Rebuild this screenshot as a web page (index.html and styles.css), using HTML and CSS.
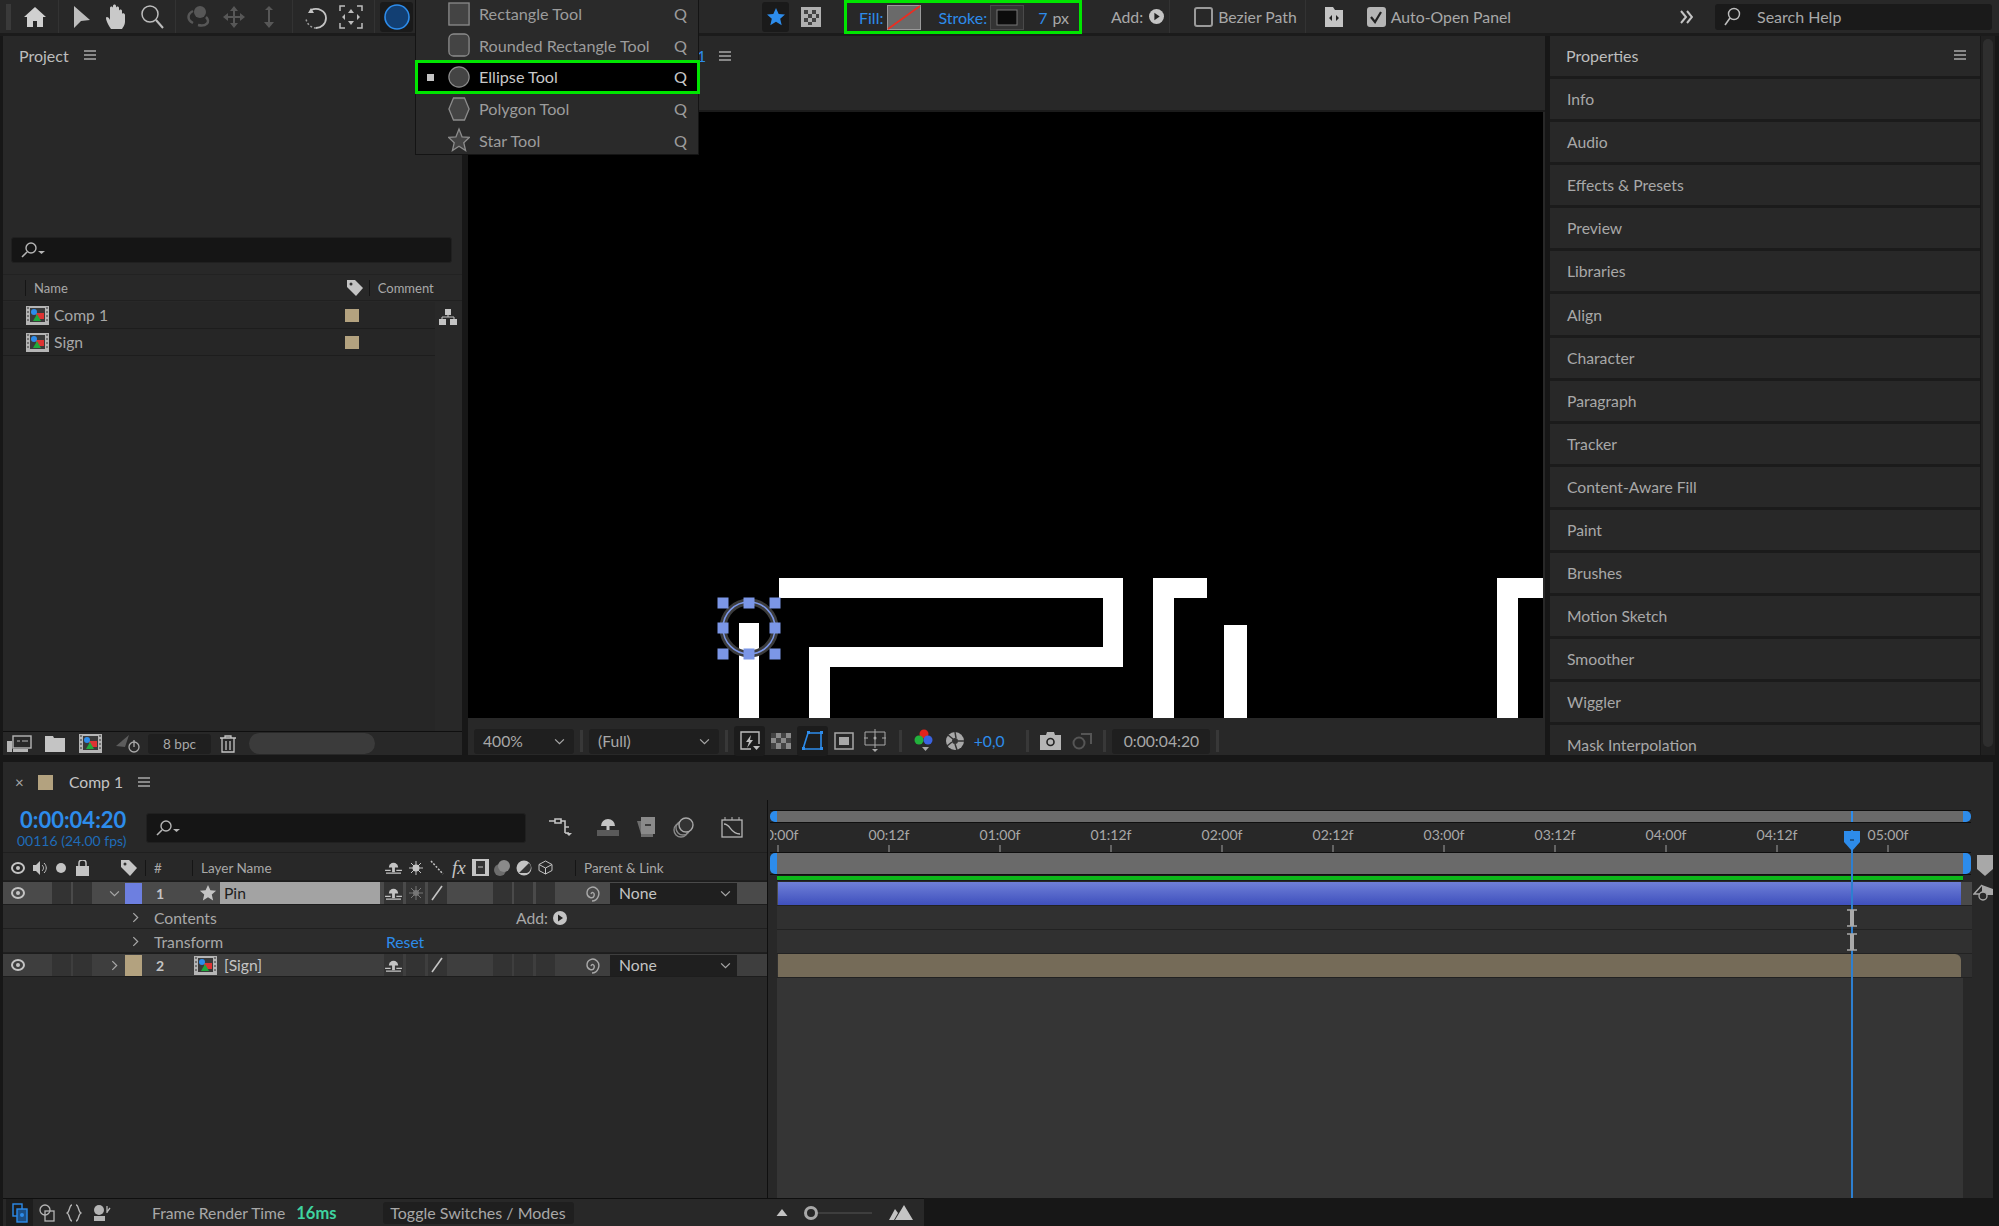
FILE: index.html
```html
<!DOCTYPE html>
<html lang="en">
<head>
  <meta charset="UTF-8" />
  <title>After Effects - Ellipse Tool</title>
  <link rel="stylesheet" href="styles.css">
</head>
<body>

  <svg class="defs" width="0" height="0">
    <symbol id="i-comp" viewBox="0 0 23 19">
      <rect width="23" height="19" fill="#b5b5b5"/>
      <rect x="4" y="2" width="15" height="14" fill="#3a3a3a"/>
      <rect x="10" y="7" width="8" height="6" fill="#d33"/>
      <circle cx="8" cy="6" r="3" fill="#2d8ceb"/>
      <path d="M11 8l4 7H7z" fill="#1faa3c"/>
      <path d="M1 2h2M1 6h2M1 10h2M1 14h2M20 2h2M20 6h2M20 10h2M20 14h2" stroke="#333"/>
    </symbol>
    <symbol id="i-burger" viewBox="0 0 12 10">
      <path d="M0 1h12M0 5h12M0 9h12" stroke="#a8a8a8" stroke-width="1.4"/>
    </symbol>
    <symbol id="i-find" viewBox="0 0 26 16">
      <circle cx="11" cy="6" r="5" fill="none" stroke="#b5b5b5" stroke-width="1.4"/>
      <path d="M7 10l-5 5" stroke="#b5b5b5" stroke-width="1.6"/>
      <path d="M18 9h7l-3.500 3z" fill="#b5b5b5"/>
    </symbol>
    <symbol id="i-eye" viewBox="0 0 14 12">
      <ellipse cx="7" cy="6" rx="6" ry="5" fill="none" stroke="#c4c4c4" stroke-width="2"/>
      <circle cx="7" cy="6" r="2" fill="#c4c4c4"/>
    </symbol>
    <symbol id="i-shy" viewBox="0 0 18 16">
      <path d="M4 8a5 5 0 0 1 10 0z" fill="#c4c4c4"/>
      <rect x="7.500" y="7" width="3" height="6" fill="#c4c4c4"/>
      <path d="M0 11h6M12 11h6M1 14h16" stroke="#c4c4c4" stroke-width="1.200"/>
    </symbol>
    <symbol id="i-down" viewBox="0 0 12 8">
      <path d="M1 1.500l5 5 5-5" fill="none" stroke="#a8a8a8" stroke-width="1.400"/>
    </symbol>
    <symbol id="i-right" viewBox="0 0 8 12">
      <path d="M1.500 1l5 5-5 5" fill="none" stroke="#a8a8a8" stroke-width="1.400"/>
    </symbol>
    <symbol id="i-spiral" viewBox="0 0 18 18">
      <path d="M9 10c1-3 4-1 3 2s-7 2-7-3 6-8 10-4 1 12-5 12" fill="none" stroke="#a8a8a8" stroke-width="1.400"/>
    </symbol>
    <symbol id="i-slash" viewBox="0 0 14 16">
      <path d="M2 15L12 1" stroke="#c4c4c4" stroke-width="1.600"/>
    </symbol>
    <symbol id="i-add" viewBox="0 0 14 14">
      <circle cx="7" cy="7" r="7" fill="#c4c4c4"/>
      <path d="M5 3.500l5 3.500-5 3.500z" fill="#222"/>
    </symbol>
    <symbol id="i-ibeam" viewBox="0 0 10 18">
      <path d="M0 1h10M0 17h10" stroke="#aaa" stroke-width="1.600"/>
      <rect x="3" y="1" width="4" height="16" fill="#aaa"/>
    </symbol>
  </svg>

  <header class="toolbar">
    <div class="grip"></div>
    <div class="tool">
      <svg width="24" height="22" viewBox="0 0 24 22"><path d="M12 1L1 11h3v10h6v-6h4v6h6V11h3z" fill="#d0d0d0"/></svg>
    </div>
    <div class="tb-sep"></div>
    <div class="tool">
      <svg width="18" height="24" viewBox="0 0 18 24"><path d="M1 1l16 14-9 1-7 7z" fill="#bdbdbd"/></svg>
    </div>
    <div class="tool">
      <svg width="24" height="26" viewBox="0 0 24 26"><path d="M6 25c-2-3-5-8-5-11 0-2 3-1 4 2V4c0-2 3-2 3 0V2c0-2 3-2 3 0v2c0-2 3-2 3 0v3c0-2 3-2 3 0v3c0-1 3-1 3 1v7c0 3-2 5-3 7z" fill="#c9c9c9"/></svg>
    </div>
    <div class="tool">
      <svg width="24" height="26" viewBox="0 0 24 26"><circle cx="10" cy="10" r="8" fill="none" stroke="#bdbdbd" stroke-width="1.500"/><path d="M16 16l7 8" stroke="#bdbdbd" stroke-width="2"/></svg>
    </div>
    <div class="tb-sep"></div>
    <div class="tool tool-dim">
      <svg width="26" height="24" viewBox="0 0 26 24"><circle cx="14" cy="7" r="6" fill="#5d5d5d"/><path d="M7 6c-6 3-6 9 0 12M20 12c5 5 0 10-8 8" fill="none" stroke="#5d5d5d" stroke-width="2.500"/></svg>
    </div>
    <div class="tool tool-dim">
      <svg width="24" height="24" viewBox="0 0 24 24"><path d="M12 1l4 5h-3v5h5V8l5 4-5 4v-3h-5v5h3l-4 5-4-5h3v-5H6v3l-5-4 5-4v3h5V6H8z" fill="#5d5d5d"/></svg>
    </div>
    <div class="tool tool-dim">
      <svg width="14" height="24" viewBox="0 0 14 24"><path d="M7 1l4 4H8v12h4l-5 6-5-6h4V5H3z" fill="#5d5d5d"/></svg>
    </div>
    <div class="tb-sep"></div>
    <div class="tool">
      <svg width="24" height="24" viewBox="0 0 24 24"><path d="M7 3l-3 5 6 0z" fill="#c4c4c4"/><path d="M7 5c7-3 15 1 15 8 0 6-5 10-10 10" fill="none" stroke="#c4c4c4" stroke-width="1.800"/><path d="M12 23c-5 0-9-4-10-9" fill="none" stroke="#9a9a9a" stroke-width="1.500" stroke-dasharray="2 2"/></svg>
    </div>
    <div class="tool">
      <svg width="24" height="24" viewBox="0 0 24 24"><path d="M1 6V1h5M18 1h5v5M23 18v5h-5M6 23H1v-5" fill="none" stroke="#bdbdbd" stroke-width="1.500"/><path d="M12 4l3 4H9zM12 20l-3-4h6zM3 12l3-3v6zM21 12l-3 3V9z" fill="#bdbdbd"/></svg>
    </div>
    <div class="tb-sep"></div>
    <div class="tool tool-active tool-shape">
      <svg width="26" height="26" viewBox="0 0 26 26"><circle cx="13" cy="13" r="12" fill="#123f73" stroke="#2d8ceb" stroke-width="1.600"/></svg>
    </div>

    <div class="tool tool-active tool-star">
      <svg width="20" height="20" viewBox="0 0 20 20"><path d="M10 1l2.700 6 6.300.6-4.800 4.200 1.500 6.400L10 14.800l-5.700 3.400 1.500-6.400L1 7.600 7.300 7z" fill="#2d8ceb"/></svg>
    </div>
    <div class="tool tool-mask">
      <svg width="20" height="20" viewBox="0 0 20 20"><rect width="20" height="20" fill="#b0b0b0"/><path d="M3 3h4v4H3zM11 3h4v4h-4zM7 7h4v4H7zM15 7h3v4h-3zM3 11h4v4H3zM11 11h4v4h-4zM7 15h4v3H7z" fill="#444"/></svg>
    </div>

    <div class="shape-opts">
      <span class="blue opt-fill">Fill:</span>
      <svg class="swatch" width="34" height="25" viewBox="0 0 34 25"><rect x=".5" y=".5" width="33" height="24" fill="#6a6a6a" stroke="#9a9a9a"/><path d="M1 24L33 1" stroke="#ee2c20" stroke-width="1.600"/></svg>
      <span class="blue opt-stroke">Stroke:</span>
      <svg class="swatch" width="34" height="25" viewBox="0 0 34 25"><rect x=".5" y=".5" width="33" height="24" fill="#333" stroke="#4a4a4a"/><rect x="7" y="5" width="20" height="15" fill="#0c0c0c" stroke="#777"/></svg>
      <span class="blue opt-width">7</span>
      <span class="opt-unit">px</span>
    </div>

    <span class="tb-label opt-add">Add:</span>
    <svg class="opt-add-icon" width="15" height="15"><use href="#i-add"/></svg>
    <div class="tb-sep sep-add"></div>
    <span class="check"></span>
    <span class="tb-label">Bezier Path</span>
    <div class="tb-sep sep-bezier"></div>
    <svg class="opt-doc" width="20" height="22" viewBox="0 0 20 22"><path d="M1 1h8l2 3h8v17H1z" fill="#c4c4c4"/><path d="M8 9l-3 3 3 3zM12 9l3 3-3 3z" fill="#222"/></svg>
    <span class="check check-on">
      <svg width="16" height="16" viewBox="0 0 16 16"><path d="M3 8l4 5 6-10" fill="none" stroke="#222" stroke-width="2.200"/></svg>
    </span>
    <span class="tb-label">Auto-Open Panel</span>

    <svg class="more" width="14" height="14" viewBox="0 0 14 14"><path d="M2 1l5 6-5 6M8 1l5 6-5 6" fill="none" stroke="#c4c4c4" stroke-width="2"/></svg>
    <div class="tb-search">
      <svg width="18" height="20" viewBox="0 0 18 20"><circle cx="11" cy="7" r="5.500" fill="none" stroke="#bdbdbd" stroke-width="1.400"/><path d="M7 11l-5 7" stroke="#bdbdbd" stroke-width="1.600"/></svg>
      <span>Search Help</span>
    </div>
  </header>

  <!-- shape tool flyout, sits over the toolbar -->
  <div class="shape-menu">
    <div class="menu-row">
      <svg width="24" height="26" viewBox="0 0 24 26"><rect x="1" y="1" width="22" height="24" fill="#444" stroke="#8c8c8c" stroke-width="1.400"/></svg>
      <span class="menu-name">Rectangle Tool</span><span>Q</span>
    </div>
    <div class="menu-row">
      <svg width="24" height="26" viewBox="0 0 24 26"><rect x="1" y="1" width="22" height="24" rx="5" fill="#444" stroke="#8c8c8c" stroke-width="1.400"/></svg>
      <span class="menu-name">Rounded Rectangle Tool</span><span>Q</span>
    </div>
    <div class="menu-row menu-selected">
      <i class="menu-bullet"></i>
      <svg width="26" height="26" viewBox="0 0 26 26"><circle cx="13" cy="13" r="12" fill="#444" stroke="#8c8c8c" stroke-width="1.400"/></svg>
      <span class="menu-name">Ellipse Tool</span><span>Q</span>
    </div>
    <div class="menu-row">
      <svg width="24" height="26" viewBox="0 0 24 26"><path d="M6 1h12l5 12-5 12H6L1 13z" fill="#444" stroke="#8c8c8c" stroke-width="1.400"/></svg>
      <span class="menu-name">Polygon Tool</span><span>Q</span>
    </div>
    <div class="menu-row">
      <svg width="24" height="26" viewBox="0 0 24 26"><path d="M12 1l3.300 8.500 8.200.5-6.300 6 2 8.500-7.200-4.700-7.200 4.700 2-8.500L.5 10l8.200-.5z" fill="#444" stroke="#8c8c8c" stroke-width="1.400"/></svg>
      <span class="menu-name">Star Tool</span><span>Q</span>
    </div>
  </div>

  <main class="workspace">
    <section class="panel project">
      <div class="panel-head">
        <span class="panel-title">Project</span>
        <svg class="burger" width="12" height="10"><use href="#i-burger"/></svg>
      </div>
      <div class="search-box project-search">
        <svg width="26" height="16"><use href="#i-find"/></svg>
      </div>
      <div class="project-cols">
        <span class="col-name">Name</span>
        <svg class="col-tag" width="18" height="18" viewBox="0 0 18 18"><path d="M1 1h8l8 8-7 8-9-9z" fill="#c4c4c4"/><circle cx="5" cy="5" r="1.500" fill="#333"/></svg>
        <span class="col-comment">Comment</span>
      </div>
      <div class="project-body">
        <div class="project-list">
          <div class="project-row">
            <svg width="23" height="19"><use href="#i-comp"/></svg>
            <span class="project-name">Comp 1</span>
            <i class="label-chip"></i>
          </div>
          <div class="project-row">
            <svg width="23" height="19"><use href="#i-comp"/></svg>
            <span class="project-name">Sign</span>
            <i class="label-chip"></i>
          </div>
        </div>
        <div class="project-side">
          <svg width="20" height="18" viewBox="0 0 20 18"><path d="M7 1h6v6H7zM1 11h7v6H1zM12 11h7v6h-7z" fill="#c4c4c4"/><path d="M10 7v2M4 11V9h12v2" fill="none" stroke="#c4c4c4"/></svg>
        </div>
      </div>
      <div class="project-foot">
        <svg class="foot-icon" width="26" height="18" viewBox="0 0 26 18"><rect x="7" y="1" width="18" height="12" fill="none" stroke="#b5b5b5" stroke-width="1.400"/><path d="M11 6h3M16 6h6" stroke="#b5b5b5"/><path d="M1 6h5v11H1zM7 14h15v3H7z" fill="#b5b5b5"/></svg>
        <svg class="foot-icon" width="20" height="16" viewBox="0 0 20 16"><path d="M0 0h8l1 2h11v14H0z" fill="#c4c4c4"/></svg>
        <svg class="foot-icon" width="25" height="19"><use href="#i-comp"/></svg>
        <svg class="foot-icon dim" width="26" height="20" viewBox="0 0 26 20"><path d="M1 12L14 1l-4 12z" fill="#5d5d5d"/><circle cx="19" cy="13" r="5" fill="none" stroke="#aaa" stroke-width="1.300"/><path d="M19 6v7" stroke="#aaa" stroke-width="1.300"/></svg>
        <span class="bpc">8 bpc</span>
        <svg class="foot-icon" width="16" height="18" viewBox="0 0 16 18"><path d="M0 3h16M5 3V1h6v2M2 3v14h12V3M6 6v9M10 6v9" fill="none" stroke="#c4c4c4" stroke-width="1.300"/></svg>
        <span class="foot-pill"></span>
      </div>
    </section>

    <section class="panel viewer">
      <div class="viewer-tab">
        <span class="blue viewer-tab-name">1</span>
        <svg class="burger" width="12" height="10"><use href="#i-burger"/></svg>
      </div>
      <div class="viewer-canvas">
        <svg width="1075" height="606" viewBox="0 0 1075 606">
          <g fill="#fff">
            <path d="M311 466h344v89H362v51h-21v-71h294v-49H311z"/>
            <rect x="271" y="511" width="20" height="95"/>
            <path d="M685 466h54v20h-33v120h-21z"/>
            <rect x="756" y="513" width="23" height="93"/>
            <path d="M1029 466h46v20h-25v120h-21z"/>
          </g>
          <circle cx="281" cy="516" r="26" fill="none" stroke="#3c3c3c" stroke-width="7"/>
          <circle cx="281" cy="516" r="26" fill="none" stroke="#7b96e6" stroke-width="1.500"/>
          <g fill="#7b96e6">
            <rect x="249.500" y="485.500" width="11" height="11"/><rect x="275.500" y="485.500" width="11" height="11"/><rect x="301.500" y="485.500" width="11" height="11"/>
            <rect x="249.500" y="510.500" width="11" height="11"/><rect x="301.500" y="510.500" width="11" height="11"/>
            <rect x="249.500" y="536.500" width="11" height="11"/><rect x="275.500" y="536.500" width="11" height="11"/><rect x="301.500" y="536.500" width="11" height="11"/>
          </g>
        </svg>
      </div>
      <div class="viewer-bar">
        <div class="select select-zoom">400%<svg width="11" height="7"><use href="#i-down"/></svg></div>
        <i class="bar-sep"></i>
        <div class="select select-res">(Full)<svg width="11" height="7"><use href="#i-down"/></svg></div>
        <i class="bar-sep"></i>
        <div class="bar-btn bar-btn-on">
          <svg width="22" height="22" viewBox="0 0 22 22"><path d="M20 14V2H2v17h10" fill="none" stroke="#bdbdbd" stroke-width="1.400"/><path d="M12 5l-5 7h3l-2 6 6-8h-3z" fill="#bdbdbd"/><path d="M14 16h7l-3.500 4z" fill="#bdbdbd"/></svg>
        </div>
        <div class="bar-btn">
          <svg width="20" height="16" viewBox="0 0 20 16"><rect width="20" height="16" fill="#8a8a8a"/><path d="M0 0h5v5H0zM10 0h5v5h-5zM5 5h5v5H5zM15 5h5v5h-5zM0 10h5v6H0zM10 10h5v6h-5z" fill="#444"/></svg>
        </div>
        <div class="bar-btn bar-btn-on">
          <svg width="22" height="20" viewBox="0 0 22 20"><path d="M7 2h13v16H2z" fill="none" stroke="#2d8ceb" stroke-width="1.600"/><path d="M6 0h3v3H6zM19 0h3v3h-3zM19 16h3v3h-3zM1 16h3v3H1z" fill="#2d8ceb"/></svg>
        </div>
        <div class="bar-btn">
          <svg width="20" height="18" viewBox="0 0 20 18"><rect x="1" y="1" width="18" height="16" fill="none" stroke="#a8a8a8" stroke-width="1.500"/><rect x="5" y="5" width="10" height="8" fill="#a8a8a8"/></svg>
        </div>
        <div class="bar-btn">
          <svg width="22" height="24" viewBox="0 0 22 24"><path d="M1 3h20v13H1zM11 0v19M0 9h4M18 9h4" fill="none" stroke="#a8a8a8"/><circle cx="11" cy="9" r="1.500" fill="#a8a8a8"/><path d="M8 20h6l-3 3z" fill="#a8a8a8"/></svg>
        </div>
        <i class="bar-sep sep-color"></i>
        <div class="bar-btn">
          <svg width="20" height="24" viewBox="0 0 20 24"><circle cx="10" cy="5" r="4.500" fill="#e3241b"/><circle cx="5" cy="11" r="4.500" fill="#22b13c"/><circle cx="14" cy="11" r="4.500" fill="#3a62e0"/><path d="M8 18h7l-3.500 4z" fill="#a8a8a8"/></svg>
        </div>
        <div class="bar-btn">
          <svg width="20" height="20" viewBox="0 0 20 20"><circle cx="10" cy="10" r="9" fill="#a8a8a8"/><path d="M10 1l1 6M19 10l-6 0M12 19l-2-6M2 15l5-4M3 4l5 4" stroke="#333" stroke-width="1.500"/><circle cx="10" cy="10" r="3" fill="#333"/></svg>
        </div>
        <span class="blue exposure">+0,0</span>
        <i class="bar-sep"></i>
        <div class="bar-btn">
          <svg width="21" height="18" viewBox="0 0 21 18"><path d="M0 3h6l1-3h7l1 3h6v15H0z" fill="#b5b5b5"/><circle cx="10.500" cy="10" r="3.500" fill="none" stroke="#222" stroke-width="1.600"/></svg>
        </div>
        <div class="bar-btn">
          <svg width="22" height="20" viewBox="0 0 22 20"><circle cx="8" cy="12" r="5.500" fill="none" stroke="#555" stroke-width="2"/><path d="M10 3h10v10" fill="none" stroke="#555" stroke-width="2"/></svg>
        </div>
        <i class="bar-sep"></i>
        <span class="viewer-time">0:00:04:20</span>
        <i class="bar-sep"></i>
      </div>
    </section>

    <section class="panel properties">
      <div class="panel-head props-head">
        <span class="panel-title">Properties</span>
        <svg class="burger" width="12" height="10"><use href="#i-burger"/></svg>
      </div>
      <div class="props-row">Info</div>
      <div class="props-row">Audio</div>
      <div class="props-row">Effects &amp; Presets</div>
      <div class="props-row">Preview</div>
      <div class="props-row">Libraries</div>
      <div class="props-row">Align</div>
      <div class="props-row">Character</div>
      <div class="props-row">Paragraph</div>
      <div class="props-row">Tracker</div>
      <div class="props-row">Content-Aware Fill</div>
      <div class="props-row">Paint</div>
      <div class="props-row">Brushes</div>
      <div class="props-row">Motion Sketch</div>
      <div class="props-row">Smoother</div>
      <div class="props-row">Wiggler</div>
      <div class="props-row">Mask Interpolation</div>
    </section>
    <div class="props-scroll"><i></i></div>
  </main>

  <section class="timeline">
    <div class="timeline-tab">
      <span class="tab-close">×</span>
      <i class="tab-chip"></i>
      <span class="tab-name">Comp 1</span>
      <svg class="burger" width="12" height="10"><use href="#i-burger"/></svg>
    </div>

    <div class="timeline-body">
      <div class="layers">
        <div class="layers-top">
          <div class="timecode">
            <div class="timecode-main">0:00:04:20</div>
            <div class="timecode-sub">00116 (24.00 fps)</div>
          </div>
          <div class="search-box layers-search">
            <svg width="26" height="16"><use href="#i-find"/></svg>
          </div>
          <div class="comp-btns">
            <svg width="24" height="20" viewBox="0 0 24 20"><path d="M0 4h6M6 2h6v4H6zM12 4h4v12M16 10h4M16 16h4" fill="none" stroke="#c4c4c4" stroke-width="1.600"/><path d="M17 16h6l-3 3z" fill="#c4c4c4"/></svg>
            <svg class="btn-shy" width="22" height="20" viewBox="0 0 22 20"><path d="M4 9a7 7 0 0 1 14 0z" fill="#c4c4c4"/><rect x="9.500" y="6" width="3" height="8" fill="#c4c4c4"/><rect x="0" y="13" width="22" height="6" fill="#5a5a5a"/></svg>
            <svg width="20" height="22" viewBox="0 0 20 22"><path d="M5 1h14v17H5z" fill="#8a8a8a"/><path d="M1 5h4v16h12v-3H5" fill="#6d6d6d"/><path d="M9 9h6" stroke="#222" stroke-width="1.500"/></svg>
            <svg width="21" height="21" viewBox="0 0 21 21"><circle cx="8" cy="13" r="7" fill="none" stroke="#8a8a8a" stroke-width="1.400"/><circle cx="10" cy="11" r="7" fill="none" stroke="#8a8a8a" stroke-width="1.400"/><circle cx="13" cy="8" r="7" fill="#333" stroke="#a8a8a8" stroke-width="1.400"/></svg>
            <svg class="btn-graph" width="22" height="22" viewBox="0 0 22 22"><rect x="1" y="4" width="20" height="17" fill="none" stroke="#b5b5b5" stroke-width="1.300"/><path d="M4 1v3M11 1v3M18 1v3" stroke="#b5b5b5"/><path d="M3 8c7 0 6 10 16 10" fill="none" stroke="#b5b5b5" stroke-width="1.300"/></svg>
          </div>
        </div>

        <div class="layer-grid layer-head">
          <svg class="cell-icon" width="14" height="12"><use href="#i-eye"/></svg>
          <svg class="cell-icon" width="16" height="16" viewBox="0 0 16 16"><path d="M1 5h3l4-4v14l-4-4H1z" fill="#c4c4c4"/><path d="M10 5c2 2 2 4 0 6M12 3c3 3 3 7 0 10" fill="none" stroke="#c4c4c4"/></svg>
          <i class="cell-icon solo-dot"></i>
          <svg class="cell-icon" width="13" height="16" viewBox="0 0 13 16"><rect y="6" width="13" height="10" fill="#c4c4c4"/><path d="M3 6V3a3.500 3 0 0 1 7 0v3" fill="none" stroke="#c4c4c4" stroke-width="1.500"/></svg>
          <span></span>
          <span></span>
          <svg class="cell-icon head-tag" width="18" height="18" viewBox="0 0 18 18"><path d="M1 1h8l8 8-7 8-9-9z" fill="#c4c4c4"/><circle cx="5" cy="5" r="1.500" fill="#333"/></svg>
          <span class="head-text head-num">#</span>
          <span></span>
          <span class="head-text head-name">Layer Name</span>
          <div class="switches">
            <svg class="cell-icon" width="17" height="15"><use href="#i-shy"/></svg>
            <svg class="cell-icon" width="14" height="14" viewBox="0 0 14 14"><circle cx="7" cy="7" r="3.500" fill="#c4c4c4"/><path d="M7 0v14M0 7h14M2 2l10 10M12 2L2 12" stroke="#c4c4c4"/></svg>
            <svg class="cell-icon" width="14" height="15" viewBox="0 0 14 15"><path d="M1 1l12 13" stroke="#c4c4c4" stroke-width="1.500" stroke-dasharray="2 1.500"/></svg>
            <span class="fx">fx</span>
            <svg class="cell-icon" width="17" height="17" viewBox="0 0 17 17"><rect width="17" height="17" fill="#c4c4c4"/><rect x="4" y="2" width="9" height="13" fill="#333"/><path d="M6 8h5" stroke="#c4c4c4"/></svg>
            <svg class="cell-icon" width="18" height="18" viewBox="0 0 18 18"><circle cx="7" cy="11" r="6" fill="#6d6d6d"/><circle cx="11" cy="7" r="6" fill="#8a8a8a"/></svg>
            <svg class="cell-icon" width="16" height="16" viewBox="0 0 16 16"><circle cx="8" cy="8" r="7.500" fill="#c4c4c4"/><path d="M13 3L3 13h8a6 6 0 0 0 2-10z" fill="#333"/></svg>
            <svg class="cell-icon" width="15" height="15" viewBox="0 0 15 15"><path d="M7.500 1L14 4.500v6L7.500 14 1 10.500v-6zM1 4.500l6.500 3.500L14 4.500M7.500 8v6" fill="none" stroke="#c4c4c4"/></svg>
          </div>
          <span class="head-text head-parent">Parent &amp; Link</span>
        </div>

        <div class="layer-grid layer-row layer-selected">
          <svg class="cell-icon" width="14" height="12"><use href="#i-eye"/></svg>
          <span></span>
          <i class="cell"></i>
          <i class="cell"></i>
          <span></span>
          <svg class="cell-icon" width="11" height="7"><use href="#i-down"/></svg>
          <i class="layer-label label-blue"></i>
          <span class="layer-num">1</span>
          <svg class="layer-type" width="18" height="18" viewBox="0 0 20 20"><path d="M10 1l2.700 6 6.300.6-4.800 4.200 1.500 6.400L10 14.800l-5.700 3.400 1.500-6.400L1 7.600 7.300 7z" fill="#c4c4c4"/></svg>
          <span class="layer-name name-edit">Pin</span>
          <div class="switches">
            <i class="cell"><svg width="17" height="15"><use href="#i-shy"/></svg></i>
            <i class="cell"><svg width="14" height="14" viewBox="0 0 14 14"><circle cx="7" cy="7" r="3" fill="#777"/><path d="M7 0v14M0 7h14M2 2l10 10M12 2L2 12" stroke="#777"/></svg></i>
            <i class="cell"><svg width="14" height="16"><use href="#i-slash"/></svg></i>
            <span></span><span></span>
            <i class="cell"></i><i class="cell"></i><i class="cell"></i>
          </div>
          <svg class="cell-icon spiral" width="18" height="18"><use href="#i-spiral"/></svg>
          <div class="parent-select">None<svg width="11" height="7"><use href="#i-down"/></svg></div>
        </div>

        <div class="prop-row">
          <svg width="7" height="11"><use href="#i-right"/></svg>
          <span class="prop-name">Contents</span>
          <span class="prop-add">Add:</span>
          <svg width="14" height="14"><use href="#i-add"/></svg>
        </div>
        <div class="prop-row">
          <svg width="7" height="11"><use href="#i-right"/></svg>
          <span class="prop-name">Transform</span>
          <span class="blue prop-reset">Reset</span>
        </div>

        <div class="layer-grid layer-row">
          <svg class="cell-icon" width="14" height="12"><use href="#i-eye"/></svg>
          <span></span>
          <i class="cell"></i>
          <i class="cell"></i>
          <span></span>
          <svg class="cell-icon" width="7" height="11"><use href="#i-right"/></svg>
          <i class="layer-label label-tan"></i>
          <span class="layer-num">2</span>
          <svg class="layer-type" width="23" height="21"><use href="#i-comp"/></svg>
          <span class="layer-name">[Sign]</span>
          <div class="switches">
            <i class="cell"><svg width="17" height="15"><use href="#i-shy"/></svg></i>
            <i class="cell"></i>
            <i class="cell"><svg width="14" height="16"><use href="#i-slash"/></svg></i>
            <span></span><span></span>
            <i class="cell"></i><i class="cell"></i><i class="cell"></i>
          </div>
          <svg class="cell-icon spiral" width="18" height="18"><use href="#i-spiral"/></svg>
          <div class="parent-select">None<svg width="11" height="7"><use href="#i-down"/></svg></div>
        </div>
      </div>

      <div class="tracks">
        <div class="nav-bar">
          <i class="handle handle-l"></i>
          <div class="nav-fill"></div>
          <i class="handle handle-r"></i>
        </div>
        <div class="ruler">
          <div class="ruler-mark">00:00f</div>
          <div class="ruler-mark">00:12f</div>
          <div class="ruler-mark">01:00f</div>
          <div class="ruler-mark">01:12f</div>
          <div class="ruler-mark">02:00f</div>
          <div class="ruler-mark">02:12f</div>
          <div class="ruler-mark">03:00f</div>
          <div class="ruler-mark">03:12f</div>
          <div class="ruler-mark">04:00f</div>
          <div class="ruler-mark">04:12f</div>
          <div class="ruler-mark">05:00f</div>
        </div>
        <div class="nav-bar work-bar">
          <i class="handle handle-l"></i>
          <div class="nav-fill"></div>
          <i class="handle handle-r"></i>
        </div>
        <div class="green-line"></div>
        <div class="track track-selected"><div class="clip clip-blue"></div></div>
        <div class="track"></div>
        <div class="track"></div>
        <div class="track"><div class="clip clip-tan"></div></div>
        <div class="track-empty"></div>

        <!-- playhead and keyframes lie over the tracks -->
        <i class="nav-tick"></i>
        <i class="playhead"></i>
        <svg class="playhead-head" width="16" height="20" viewBox="0 0 16 20"><path d="M0 0h16v11l-8 9-8-9z" fill="#2d8ceb"/><path d="M6 9h4" stroke="#123"/></svg>
        <svg class="keyframe key-1" width="10" height="18"><use href="#i-ibeam"/></svg>
        <svg class="keyframe key-2" width="10" height="18"><use href="#i-ibeam"/></svg>
        <svg class="marker-well" width="16" height="21" viewBox="0 0 16 21"><path d="M0 0h16v14l-8 7-8-7z" fill="#a8a8a8"/></svg>
        <svg class="comp-well" width="21" height="17" viewBox="0 0 21 17"><path d="M9 1l11 4v6H9z" fill="#a8a8a8"/><path d="M9 1L1 10h8" fill="none" stroke="#a8a8a8" stroke-width="1.400"/><circle cx="10" cy="12" r="4" fill="#2a2a2a" stroke="#a8a8a8" stroke-width="1.400"/></svg>
      </div>
    </div>
  </section>

  <footer class="status">
    <div class="status-btn status-btn-on">
      <svg width="16" height="20" viewBox="0 0 16 20"><rect x="1" y="1" width="9" height="12" fill="none" stroke="#2d8ceb" stroke-width="1.400"/><rect x="5" y="6" width="10" height="13" fill="#1d4f85" stroke="#2d8ceb" stroke-width="1.400"/><circle cx="10" cy="12" r="2" fill="#2d8ceb"/></svg>
    </div>
    <div class="status-btn">
      <svg width="16" height="18" viewBox="0 0 16 18"><circle cx="6" cy="6" r="5" fill="none" stroke="#b5b5b5" stroke-width="1.300"/><rect x="6" y="7" width="9" height="10" fill="none" stroke="#b5b5b5" stroke-width="1.300"/></svg>
    </div>
    <div class="status-btn">
      <svg width="16" height="18" viewBox="0 0 16 18"><path d="M6 1C3 1 4 8 1 9c3 1 2 8 5 8M10 1c3 0 2 7 5 8-3 1-2 8-5 8" fill="none" stroke="#b5b5b5" stroke-width="1.300"/></svg>
    </div>
    <div class="status-btn">
      <svg width="20" height="18" viewBox="0 0 20 18"><circle cx="8" cy="6" r="5" fill="#b5b5b5"/><rect x="3" y="12" width="11" height="5" fill="#b5b5b5"/><path d="M16 2v7M19 4l-3 4" stroke="#b5b5b5" stroke-width="1.300"/></svg>
    </div>
    <span class="render-label">Frame Render Time</span>
    <span class="render-time">16ms</span>
    <span class="toggle-btn">Toggle Switches / Modes</span>
    <svg class="mtn-small" width="12" height="7" viewBox="0 0 14 9"><path d="M7 0l7 9H0z" fill="#c4c4c4"/></svg>
    <i class="zoom-knob"></i>
    <i class="zoom-line"></i>
    <svg class="mtn-big" width="24" height="15" viewBox="0 0 24 15"><path d="M15 0l9 15H6zM6 4l3 4-4 7H0z" fill="#c4c4c4"/></svg>
  </footer>

</body>
</html>
```
FILE: styles.css
```css
* {
  box-sizing: border-box;
}
body {
  margin: 0;
  width: 1999px;
  height: 1226px;
  overflow: hidden;
  position: relative;
  display: flex;
  flex-direction: column;
  background-color: #171717;
  color: #a8a8a8;
  font-family: Lato, "Open Sans", sans-serif;
  font-size: 15.700px;
}
i {
  display: block;
}
svg {
  display: block;
  flex: none;
}
.defs {
  position: absolute;
}
.blue {
  color: #2d8ceb;
}

/* toolbar */
.toolbar {
  height: 36px;
  flex: none;
  display: flex;
  align-items: center;
  background-color: #282828;
  border-bottom: 3px solid #1b1b1b;
}
.grip {
  width: 5px;
  height: 26px;
  margin-left: 6px;
  background-color: #3a3a3a;
  margin-right: 6px;
}
.tool {
  width: 35px;
  height: 30px;
  display: flex;
  align-items: center;
  justify-content: center;
}
.tool-dim svg {
  opacity: 0.9;
}
.tool-active {
  background-color: #1a1a1a;
  border-radius: 3px;
}
.tool-shape {
  width: 33px;
}
.tool-star {
  width: 27px;
  margin-left: 349px;
}
.tool-mask {
  width: 27px;
  margin-left: 8px;
}
.tb-sep {
  width: 1px;
  height: 33px;
  background-color: #333;
  margin: 0 5px 0 6px;
}
.shape-opts {
  width: 238px;
  height: 34px;
  margin-left: 20px;
  align-self: flex-start;
  display: flex;
  align-items: center;
  border: 3px solid #00e600;
  padding-left: 12px;
  color: #a8a8a8;
  font-size: 16px;
}
.opt-fill {
  margin-right: 4px;
}
.opt-stroke {
  margin-left: 17px;
  margin-right: 3px;
}
.opt-width {
  margin-left: 14px;
}
.opt-unit {
  margin-left: 5px;
}
.tb-label {
  white-space: nowrap;
  font-size: 15.800px;
}
.opt-add {
  margin-left: 29px;
}
.opt-add-icon {
  margin-left: 6px;
}
.sep-add {
  margin: 0 0 0 5px;
}
.check {
  width: 19px;
  height: 20px;
  margin-left: 24px;
  margin-right: 5px;
  border: 2px solid #9a9a9a;
  border-radius: 3px;
  display: flex;
  align-items: center;
  justify-content: center;
}
.check-on {
  background-color: #b5b5b5;
  border-color: #b5b5b5;
  margin-left: 23px;
}
.sep-bezier {
  margin: 0 0 0 8px;
}
.opt-doc {
  margin-left: 18px;
}
.more {
  margin-left: auto;
  margin-right: 22px;
}
.tb-search {
  width: 277px;
  height: 26px;
  margin-right: 7px;
  padding-left: 8px;
  display: flex;
  align-items: center;
  gap: 16px;
  background-color: #1a1a1a;
  border-radius: 3px;
  font-size: 16px;
}

/* shape menu */
.shape-menu {
  position: absolute;
  left: 415px;
  top: -3px;
  width: 284px;
  height: 158px;
  padding-left: 2px;
  background-color: #2a2a2a;
  border: 1px solid #141414;
  z-index: 5;
  font-size: 16.200px;
}
.menu-row {
  height: 31.600px;
  display: flex;
  align-items: center;
  padding: 0 11px 0 30px;
  color: #9c9c9c;
  position: relative;
}
.menu-row svg {
  width: 22px;
}
.menu-name {
  flex: 1;
  margin-left: 9px;
}
.menu-selected {
  background-color: #000;
  color: #c8c8c8;
  outline: 3px solid #00e600;
  outline-offset: -2px;
  margin: 0 -1px 0 -2px;
  padding-left: 32px;
  padding-right: 12px;
}
.menu-bullet {
  position: absolute;
  left: 11px;
  top: 13px;
  width: 7px;
  height: 7px;
  background-color: #c4c4c4;
}

/* top panels */
.workspace {
  height: 719px;
  flex: none;
  display: flex;
  padding-left: 3px;
}
.panel {
  background-color: #282828;
  display: flex;
  flex-direction: column;
}
.panel-head {
  height: 40px;
  flex: none;
  display: flex;
  align-items: center;
  padding: 0 0 2px 16px;
}
.panel-title {
  color: #bdbdbd;
  font-size: 16px;
}
.burger {
  margin-left: 15px;
}
.search-box {
  height: 26px;
  display: flex;
  align-items: center;
  padding-left: 8px;
  background-color: #151515;
  border: 1px solid #202020;
  border-radius: 3px;
}

/* project */
.project {
  width: 459px;
}
.project-search {
  margin: 161px 10px 0 8px;
  flex: none;
}
.project-cols {
  height: 27px;
  margin-top: 11px;
  flex: none;
  position: relative;
  display: flex;
  align-items: center;
  font-size: 13px;
  border-top: 1px solid #222;
  border-bottom: 1px solid #202020;
}
.col-name {
  margin-left: 22px;
  padding-left: 8px;
  border-left: 1px solid #151515;
  height: 16px;
  line-height: 16px;
}
.col-tag {
  margin-left: 278px;
}
.col-comment {
  margin-left: 5px;
  padding-left: 8px;
  border-left: 1px solid #151515;
  height: 16px;
  line-height: 16px;
}
.project-body {
  flex: 1;
  display: flex;
  padding-top: 1px;
}
.project-list {
  flex: 1;
  background-color: #262626;
}
.project-row {
  height: 27px;
  display: flex;
  align-items: center;
  padding-left: 23px;
  border-bottom: 1px solid #1d1d1d;
}
.project-name {
  margin-left: 5px;
  width: 291px;
}
.label-chip {
  width: 14px;
  height: 13px;
  background-color: #b3a27f;
}
.project-side {
  width: 27px;
  padding-left: 3px;
  padding-top: 6px;
}
.project-foot {
  height: 24px;
  flex: none;
  display: flex;
  align-items: center;
  padding-left: 3px;
  border-top: 1px solid #0f0f0f;
  position: relative;
}
.foot-icon {
  margin-right: 13px;
}
.project-foot .dim {
  margin-right: 0;
  margin-left: -1px;
}
.bpc {
  width: 63px;
  height: 20px;
  line-height: 20px;
  margin: 0 9px 0 7px;
  text-align: center;
  font-size: 13.500px;
  background-color: #1f1f1f;
  border-radius: 3px;
}
.foot-pill {
  width: 126px;
  height: 21px;
  background-color: #3b3b3b;
  border-radius: 11px;
}

/* viewer */
.viewer {
  width: 1077px;
  margin-left: 6px;
}
.viewer-tab {
  height: 76px;
  flex: none;
  display: flex;
  align-items: flex-start;
  padding: 12px 0 0 229px;
  border-bottom: 2px solid #1b1b1b;
}
.viewer-tab-name {
  line-height: 16px;
}
.viewer-tab .burger {
  margin-top: 3px;
  margin-left: 13px;
}
.viewer-canvas {
  height: 606px;
  width: 1075px;
  flex: none;
  background-color: #000;
}
.viewer-bar {
  flex: 1;
  display: flex;
  align-items: center;
  padding: 8px 0 0 6px;
}
.select {
  height: 25px;
  display: flex;
  align-items: center;
  justify-content: space-between;
  padding: 0 9px;
  background-color: #1f1f1f;
  border-radius: 3px;
}
.select-zoom {
  width: 100px;
}
.select-res {
  width: 130px;
}
.bar-sep {
  width: 3px;
  height: 22px;
  margin: 0 6px;
  background-color: #383838;
}
.sep-color {
  margin-left: 8px;
}
.bar-btn {
  width: 31.400px;
  height: 30px;
  display: flex;
  align-items: center;
  justify-content: center;
}
.bar-btn-on {
  background-color: #1c1c1c;
  border-radius: 3px;
}
.exposure {
  margin: 0 15px 0 3px;
}
.viewer-time {
  width: 98px;
  height: 25px;
  line-height: 25px;
  text-align: center;
  background-color: #1f1f1f;
  border-radius: 3px;
}

/* properties */
.properties {
  width: 430px;
  margin-left: 5px;
}
.props-head {
  justify-content: space-between;
  padding-right: 14px;
}
.props-row {
  height: 43.100px;
  flex: none;
  display: flex;
  align-items: center;
  padding-left: 17px;
  border-top: 3px solid #1b1b1b;
}
.props-scroll {
  width: 14px;
  background-color: #202020;
  padding: 3px 2px 0 2px;
  margin-left: 1px;
}
.props-scroll i {
  height: 708px;
  border-radius: 5px;
  background-color: #2e2e2e;
}

/* timeline */
.timeline {
  height: 436px;
  margin: 7px 6px 0 3px;
  flex: none;
  display: flex;
  flex-direction: column;
  background-color: #282828;
}
.timeline-tab {
  height: 38px;
  flex: none;
  display: flex;
  align-items: center;
  padding: 2px 0 0 12px;
}
.tab-close {
  width: 12px;
  font-size: 15px;
}
.tab-chip {
  width: 15px;
  height: 15px;
  margin-left: 11px;
  background-color: #b3a27f;
}
.tab-name {
  margin-left: 16px;
  color: #c4c4c4;
}
.timeline-body {
  flex: 1;
  display: flex;
  min-height: 0;
}
.layers {
  width: 765px;
  flex: none;
  border-right: 1px solid #0f0f0f;
}
.layers-top {
  height: 53px;
  display: flex;
  border-bottom: 1px solid #1f1f1f;
}
.timecode {
  width: 143px;
  padding: 8px 0 0 17px;
}
.timecode-main {
  color: #2d8ceb;
  font-size: 22px;
  font-weight: 700;
  line-height: 24px;
}
.timecode-sub {
  color: #1f6cb8;
  font-size: 14px;
  line-height: 17px;
  margin-left: -3px;
  white-space: nowrap;
}
.layers-search {
  width: 380px;
  height: 30px;
  margin-top: 13px;
  flex: none;
}
.comp-btns {
  display: flex;
  align-items: center;
  height: 54px;
  padding-left: 23px;
  gap: 17px;
}
.btn-shy {
  margin-left: 7px;
}
.btn-graph {
  margin-left: 10px;
}
.layer-grid {
  display: grid;
  grid-template-columns: 30px 14px 28px 14px 17px 16px 23px 27px 48px 160px 198px 32px 127px;
  align-items: center;
  justify-items: center;
}
.layer-head {
  height: 28px;
  padding-top: 2px;
  font-size: 13.500px;
  border-bottom: 1px solid #1f1f1f;
}
.head-text {
  justify-self: start;
  white-space: nowrap;
}
.head-tag {
  margin-left: -10px;
}
.head-num {
  padding-left: 8px;
  border-left: 1px solid #151515;
}
.head-name {
  margin-left: -28px;
  padding-left: 8px;
  border-left: 1px solid #151515;
}
.head-parent {
  grid-column: 12 / span 2;
  padding-left: 8px;
  border-left: 1px solid #151515;
  margin-left: -3px;
}
.solo-dot {
  width: 10px;
  height: 10px;
  border-radius: 50%;
  background-color: #c4c4c4;
}
.switches {
  width: 100%;
  display: grid;
  grid-template-columns: repeat(8, 21.700px);
  align-items: center;
  justify-items: center;
  padding-left: 3px;
}
.fx {
  font-family: "Liberation Serif", serif;
  font-style: italic;
  font-size: 19px;
  line-height: 16px;
  color: #c4c4c4;
}
.layer-row {
  height: 24px;
  background-color: #3e3e3e;
  border-top: 1px solid #1d1d1d;
  border-bottom: 1px solid #1d1d1d;
}
.layer-selected {
  background-color: #4a4a4a;
}
.cell {
  width: 19px;
  height: 22px;
  background-color: #333;
  display: flex;
  align-items: center;
  justify-content: center;
}
.spiral {
  margin-left: -6px;
}
.layer-label {
  width: 17px;
  height: 21px;
}
.label-blue {
  background-color: #6d7fe0;
}
.label-tan {
  background-color: #b3a27f;
}
.layer-num {
  color: #c4c4c4;
  font-weight: 700;
  font-size: 14px;
  justify-self: start;
  margin-left: 11px;
}
.layer-type {
  justify-self: end;
  margin-right: 3px;
}
.layer-name {
  justify-self: stretch;
  padding-left: 4px;
  line-height: 22px;
  color: #c4c4c4;
}
.name-edit {
  background-color: #a3a3a3;
  color: #1d1d1d;
}
.parent-select {
  justify-self: stretch;
  height: 21px;
  display: flex;
  align-items: center;
  justify-content: space-between;
  padding: 0 6px 0 9px;
  background-color: #1f1f1f;
  color: #c4c4c4;
}
.prop-row {
  height: 24px;
  display: flex;
  align-items: center;
  padding: 2px 0 0 129px;
  background-color: #2c2c2c;
  border-bottom: 1px solid #1f1f1f;
}
.prop-name {
  margin-left: 15px;
  width: 240px;
}
.prop-add {
  width: 154px;
  text-align: right;
  margin-right: 5px;
}
.prop-reset {
  margin-left: -8px;
}

/* tracks */
.tracks {
  flex: 1;
  min-width: 0;
  position: relative;
  display: flex;
  flex-direction: column;
  padding-top: 10px;
}
.nav-bar {
  height: 13px;
  margin-left: 2px;
  width: 1201px;
  flex: none;
  display: flex;
  border-top: 1px solid #0f0f0f;
  border-bottom: 1px solid #0f0f0f;
}
.nav-fill {
  width: 1186px;
  background-color: #6a6a6a;
}
.handle {
  width: 8px;
  background-color: #2d8ceb;
}
.handle-l {
  border-radius: 5px 0 0 5px;
  width: 7px;
}
.handle-r {
  border-radius: 0 5px 5px 0;
}
.ruler {
  height: 29px;
  flex: none;
  display: flex;
  margin-left: 2px;
  width: 1194px;
  overflow: hidden;
}
.ruler-mark {
  flex: 0 0 111px;
  text-align: center;
  font-size: 14px;
  line-height: 24px;
  position: relative;
  transform: translateX(-47.500px);
}
.ruler-mark::after {
  content: "";
  position: absolute;
  left: 55px;
  bottom: 0;
  width: 1px;
  height: 7px;
  background-color: #a0a0a0;
}
.work-bar {
  height: 23px;
}
.green-line {
  height: 6px;
  flex: none;
  margin-left: 9px;
  width: 1186px;
  background-color: #0db81a;
  border-top: 1px solid #1a1a1a;
  border-bottom: 1px solid #1a1a1a;
}
.track {
  height: 24px;
  flex: none;
  margin-left: 9px;
  width: 1195px;
  background-color: #303030;
  border-bottom: 1px solid #222;
}
.track-selected {
  background-color: #4a4a4a;
  margin-top: 1px;
}
.clip {
  height: 23px;
  width: 1183px;
  margin-left: 1px;
}
.clip-blue {
  background: linear-gradient(#6f80d8, #3f50bd);
}
.clip-tan {
  background-color: #756b58;
  border-radius: 0 6px 0 0;
}
.track-empty {
  flex: 1;
  margin-left: 9px;
  width: 1186px;
  background-color: #353535;
}
.nav-tick {
  position: absolute;
  left: 1083px;
  top: 11px;
  width: 2px;
  height: 11px;
  background-color: #2d8ceb;
}
.playhead {
  position: absolute;
  left: 1083px;
  top: 30px;
  bottom: 0;
  width: 2px;
  background-color: #2d7fd0;
}
.playhead-head {
  position: absolute;
  left: 1076px;
  top: 31px;
}
.keyframe {
  position: absolute;
  left: 1079px;
}
.key-1 {
  top: 109px;
}
.key-2 {
  top: 133px;
}
.marker-well {
  position: absolute;
  left: 1209px;
  top: 55px;
}
.comp-well {
  position: absolute;
  left: 1205px;
  top: 84px;
}

/* status bar */
.status {
  flex: 1;
  display: flex;
  align-items: center;
  padding: 0 0 2px 3px;
  border-top: 1px solid #0f0f0f;
  margin-left: 3px;
  white-space: nowrap;
  width: 921px;
  background-color: #282828;
}
.status-btn {
  width: 27px;
  height: 27px;
  display: flex;
  align-items: center;
  justify-content: center;
}
.status-btn-on {
  background-color: #1d1d1d;
}
.render-label {
  margin-left: 38px;
}
.render-time {
  margin-left: 11px;
  color: #3fd4a0;
  font-weight: 700;
  font-size: 16.500px;
}
.toggle-btn {
  margin-left: 46px;
  width: 191px;
  height: 22px;
  line-height: 22px;
  text-align: center;
  background-color: #1f1f1f;
  border-radius: 3px;
  font-size: 16px;
  flex: none;
}
.mtn-small {
  margin-left: 202px;
}
.zoom-knob {
  width: 14px;
  height: 14px;
  margin-left: 16px;
  border: 3px solid #a8a8a8;
  border-radius: 50%;
  flex: none;
}
.zoom-line {
  width: 54px;
  height: 2px;
  background-color: #3e3e3e;
  flex: none;
}
.mtn-big {
  margin-left: 17px;
}
```
